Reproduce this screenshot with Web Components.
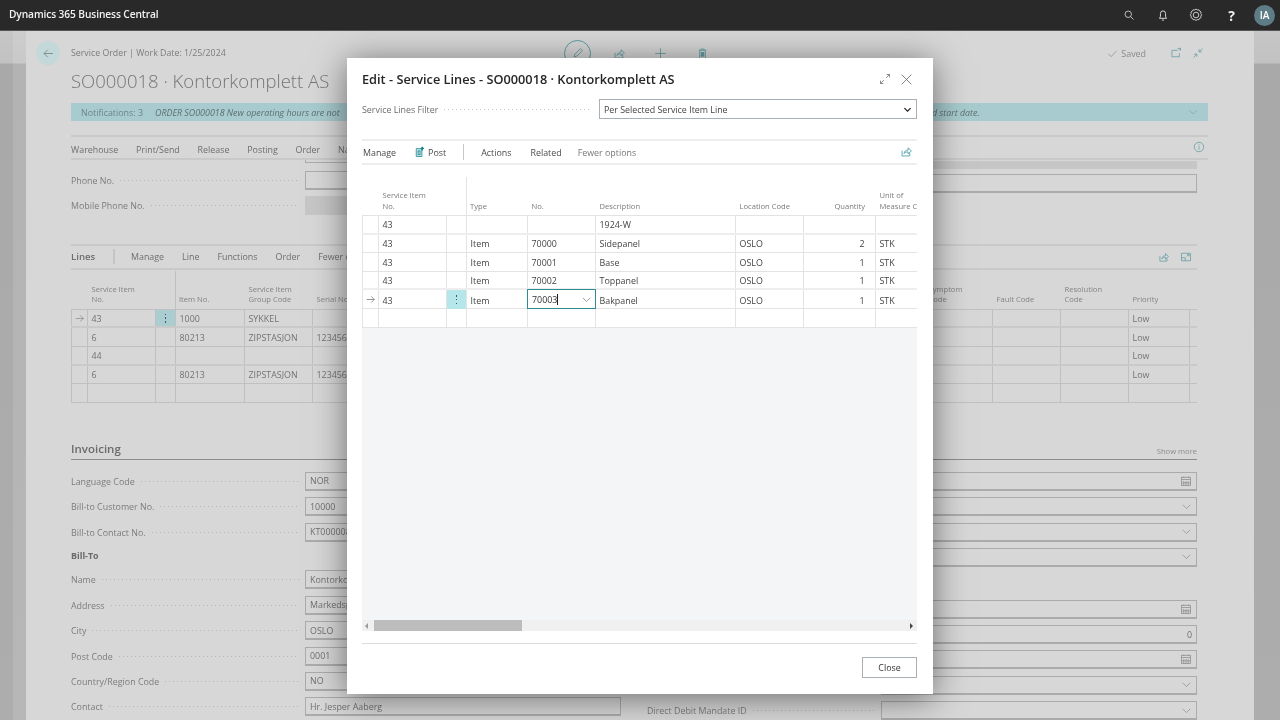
<!DOCTYPE html>
<html lang="en">
<head>
<meta charset="utf-8">
<title>Edit - Service Lines</title>
<style>
  html,body{margin:0;padding:0;height:720px;overflow:hidden;background:#a9a9a9}
  body{font-family:"Open Sans","Noto Sans",Arial,sans-serif;font-size:8.9px}
</style>
</head>
<body>
<bc-app></bc-app>
<script>
const ICONS = {
  search:'<circle cx="7" cy="7" r="4.3"/><path d="M10.2 10.2 14 14"/>',
  bell:'<path d="M3.900 11.800c.9-1 1.200-1.900 1.200-3.800V6.200a2.900 2.900 0 0 1 5.800 0V8c0 1.900.3 2.800 1.200 3.800Z"/><path d="M6.800 13.800h2.400"/>',
  gear:'<path d="M8 1.200l1.500 1 1.800-.2.800 1.600 1.600.8-.2 1.800 1 1.500-1 1.500.2 1.800-1.600.8-.8 1.600-1.800-.2-1.500 1-1.500-1-1.800.2-.8-1.600-1.600-.8.2-1.800-1-1.500 1-1.500-.2-1.800 1.600-.8.8-1.600 1.800.2Z"/><circle cx="8" cy="8" r="3.200"/>',
  arrow:'<path d="M2.500 8h11M7 3.500 2.500 8 7 12.500"/>',
  arrowr:'<path d="M2.500 8h11M9 3.500 13.500 8 9 12.500"/>',
  pencil:'<path d="M3.500 12.500l1-3.200 6.300-6.300 2.200 2.200-6.300 6.300Z"/>',
  share:'<path d="M2.500 7v6.500h9.500V10"/><path d="M5 10.500c.3-2.800 2.200-4.200 5-4.200V3.500l4 3.800-4 3.700V8.500c-2.200 0-3.800.5-5 2Z"/>',
  plus:'<path d="M8 1.500v13M1.500 8h13"/>',
  trash:'<path d="M3.500 4h9M6 4V2.500h4V4M4.500 4v10h7V4"/><path d="M6.500 6v6M8 6v6M9.500 6v6" stroke-width="1.400"/>',
  check:'<path d="M2 8.500 6 12.500 14 4"/>',
  open:'<path d="M10 4.500H2.500v8.500h10V8.500"/><path d="M10 1.800h4v3"/><path d="M14 1.800l-2.600 2.600"/>',
  collapse:'<path d="M14 2l-4.600 4.600M9.500 3v3.600h3.600M2 14l4.600-4.600M6.500 13V9.400H2.900"/>',
  expand:'<path d="M9.500 6.500 14 2M10.200 2H14v3.800M6.500 9.500 2 14M5.800 14H2v-3.800"/>',
  close:'<path d="M2 2l12 12M14 2 2 14"/>',
  chevron:'<path d="M2.500 5.500 8 11l5.500-5.500"/>',
  info:'<circle cx="8" cy="8" r="6.300"/><path d="M8 7v4.500M8 4.500v1.200"/>',
  calendar:'<rect x="2" y="3" width="12" height="11"/><path d="M2 6h12M5 2v2M11 2v2M5 8v6M8 8v6M11 8v6M2 10.500h12"/>',
  maximize:'<path d="M2 3h12v10H2Z"/><path d="M2 9h5v4M9 7l3-2.500M9.500 4.500H12V7"/>',
  post:'<path d="M3 3.500h7.500V14H3Z" fill="#cfe9ec"/><path d="M5.500 6.500v5M8 6.500v5M5 6.500h3.500M5 11.500h3.500"/><path d="M11 1v5M8.800 3.200h4.400" stroke="#0b7f8a" stroke-width="1.800"/>'
};

class BcIcon extends HTMLElement {
  connectedCallback(){
    const n=this.getAttribute('name'), s=this.getAttribute('size')||16, w=this.getAttribute('weight')||1;
    const r=this.shadowRoot||this.attachShadow({mode:'open'});
    r.innerHTML=`<style>:host{display:inline-flex;flex:none;width:${s}px;height:${s}px;color:inherit}svg{width:100%;height:100%;fill:none;stroke:currentColor;stroke-width:${w}}</style><svg viewBox="0 0 16 16">${ICONS[n]||''}</svg>`;
  }
}
customElements.define('bc-icon',BcIcon);

class BcTopbar extends HTMLElement {
  constructor(){super();this.attachShadow({mode:'open'}).innerHTML=`
  <style>
    :host{display:flex;align-items:center;height:31px;background:#292929;color:#fff;padding:0 5px 0 9px;box-sizing:border-box;border-bottom:1px solid #555;font-family:inherit}
    .brand{font-size:10.2px;font-weight:600;flex:1;color:#f2f2f2;letter-spacing:-.1px;padding-bottom:2px}
    .wrap{display:flex;align-items:center;color:#dcdcdc}
    .q{font:700 14px "Open Sans",sans-serif;color:#eee;width:8px;text-align:center}
    .av{width:21px;height:21px;border-radius:50%;background:#5d7c86;color:#fff;font-size:10px;font-weight:600;display:flex;align-items:center;justify-content:center}
  </style>
  <span class="brand">Dynamics 365 Business Central</span>
  <span class="wrap">
    <bc-icon name="search" size="12" weight="1.100"></bc-icon>
    <bc-icon name="bell" size="14" weight="1.100" style="margin-left:21px"></bc-icon>
    <bc-icon name="gear" size="14" weight="1" style="margin-left:19px"></bc-icon>
    <span class="q" style="margin-left:25px">?</span>
    <span class="av" style="margin-left:18.500px">IA</span>
  </span>`}
}
customElements.define('bc-topbar',BcTopbar);

class BcField extends HTMLElement {
  constructor(){super();this.attachShadow({mode:'open'})}
  connectedCallback(){
    const label=this.getAttribute('label')||'', v=this.getAttribute('value')||'', icon=this.getAttribute('icon'), right=this.hasAttribute('right'), dis=this.hasAttribute('disabled');
    this.shadowRoot.innerHTML=`<style>
      :host{display:grid;grid-template-columns:234px 1fr;align-items:center;height:19px;margin-bottom:6.400px;color:#7c7c7c}
      .l{display:flex;align-items:center;gap:6px;white-space:nowrap;padding-right:6px;overflow:hidden}
      .d{flex:1;height:1px;background:repeating-linear-gradient(90deg,#b4b4b4 0 1px,transparent 1px 4px)}
      .i{height:19px;box-sizing:border-box;border:1px solid #a9abad;border-bottom-width:2px;display:flex;align-items:center;padding:0 4px;justify-content:space-between;color:#707070}
      .i.dis{background:#c6c6c6;border-color:#c6c6c6}
      .v{flex:1;white-space:nowrap;overflow:hidden}
      .v.r{text-align:right}
      bc-icon{color:#8c8c8c}
    </style>
    <span class="l"><span>${label}</span>${label?'<span class="d"></span>':''}</span>
    <span class="i ${dis?'dis':''}"><span class="v ${right?'r':''}">${v}</span>${icon?`<bc-icon name="${icon}" size="${icon=='calendar'?12:11}"></bc-icon>`:''}</span>`;
  }
}
customElements.define('bc-field',BcField);

class BcGrid extends HTMLElement {
  constructor(){super();this.attachShadow({mode:'open'})}
  connectedCallback(){
    const cols=this.getAttribute('cols').trim().split(/\s+/).map(c=>c+'px').join(' ');
    const heads=JSON.parse(this.getAttribute('heads'));
    const rows=JSON.parse(this.getAttribute('rows'));
    const active=+this.getAttribute('active'), sep=+this.getAttribute('sep');
    const focus=this.getAttribute('focus');
    const right=(this.getAttribute('right')||'').split(' ');
    const thick=(this.getAttribute('thick')||'').split(' ');
    const head=heads.map((h,i)=>`<div class="h ${i==sep?'sep':''} ${right.includes(''+i)?'rt':''}">${h}</div>`).join('');
    const body=rows.map((r,ri)=>`<div class="row ${thick.includes(''+ri)?'thick':''}">`+r.map((c,ci)=>{
      let cls='c', inner=c;
      if(right.includes(''+ci)) cls+=' rt';
      if(ri==active&&ci==0) {cls+=' ar';inner='<bc-icon name="arrowr" size="11"></bc-icon>';}
      if(ri==active&&ci==2) {cls+=' keb';inner='<span class="k"><i></i><i></i><i></i></span>';}
      if(focus&&focus==ri+','+ci) {cls+=' foc';inner=`<span>${c}<span class="caret"></span></span><bc-icon name="chevron" size="11"></bc-icon>`;}
      return `<div class="${cls}">${inner}</div>`;
    }).join('')+'</div>').join('');
    this.shadowRoot.innerHTML=`<style>
      :host{display:block;overflow:hidden;--cols:${cols}}
      .hd,.row{display:grid;grid-template-columns:var(--cols);width:max-content}
      .hd{height:38px}
      .h{display:flex;align-items:flex-end;padding:0 3.500px 4px;line-height:10.500px;color:var(--grid-head,#7a7a7a);font-size:7.600px;box-sizing:border-box;overflow:hidden;white-space:pre}
      .h.sep{border-left:1px solid var(--grid-line,#e3e3e3);margin-left:-1px;padding-left:3px}
      .h.rt{justify-content:flex-end;text-align:right;padding-right:11px}
      .body{border-top:1px solid var(--grid-line,#e3e3e3)}
      .row{height:18.600px;box-sizing:border-box;border-bottom:1px solid var(--grid-line,#e3e3e3)}
      .row.thick{border-bottom-width:2px;border-bottom-color:var(--grid-thick,#eee)}
      .c{box-sizing:border-box;border-right:1px solid var(--grid-line,#e3e3e3);padding:1px 3.500px 0;display:flex;align-items:center;white-space:nowrap;color:var(--grid-text,#444);overflow:hidden}
      .c:first-child{border-left:1px solid var(--grid-line,#e3e3e3)}
      .c.rt{justify-content:flex-end;padding-right:10.500px}
      .ar{padding:0;justify-content:center;color:var(--grid-head,#666)}
      .keb{background:var(--grid-keb,#b4e6ea);justify-content:center;padding:0}
      .k{display:flex;flex-direction:column;gap:2.200px}
      .k i{width:1.500px;height:1.500px;background:#3c5c60;display:block}
      .foc{border:1px solid #2f8c93;justify-content:space-between;background:#fff;margin-top:-1px;margin-left:-1px;height:19.600px;width:calc(100% + 1px);color:#333;padding-left:4px}
      .foc bc-icon{color:#777}
      .caret{display:inline-block;width:1px;height:11px;background:#222;vertical-align:-2px}
    </style>
    <div class="hd">${head}</div><div class="body">${body}</div>`;
  }
}
customElements.define('bc-grid',BcGrid);

class BcPage extends HTMLElement {
  constructor(){super();
    const e=(n)=>Array(n).fill('');
    const cols='17 68 20 69 68 68 68 68 68 68 68 68 68 68 68 68 68 61 7';
    const heads=JSON.stringify(['','Service Item\nNo.','','Item No.','Service Item\nGroup Code','Serial No.',...e(8),'Symptom\nCode','Fault Code','Resolution\nCode','Priority','']);
    const mk=(a,b,c,d,f)=>['',a,'',b,c,d,...e(11),f,''];
    const rows=JSON.stringify([mk('43','1000','SYKKEL','','Low'),mk('6','80213','ZIPSTASJON','123456','Low'),mk('44','','','','Low'),mk('6','80213','ZIPSTASJON','123456','Low'),mk('','','','','')]);
    this.attachShadow({mode:'open'}).innerHTML=`
  <style>
    :host{display:block;box-sizing:border-box;width:1228px;height:689px;margin-left:26px;background:#d7d7d7;padding:0 57px 0 45px;overflow:hidden;color:#7c7c7c;--grid-line:#c0c0c0;--grid-thick:#c9c9c9;--grid-text:#737373;--grid-head:#838383;--grid-keb:#a9cdd0}
    .top{display:flex;align-items:center;height:26px;margin:9px -11px 0 0}
    .back{width:24px;height:24px;margin-left:-35px;margin-right:11px;border-radius:50%;background:#c2d8d9;display:flex;align-items:center;justify-content:center;color:#6f8488;flex:none}
    .crumb{flex:0 0 493px;white-space:nowrap;font-size:8.800px}
    .pen{width:25px;height:25px;border:1px solid #5e9ca1;border-radius:50%;display:flex;align-items:center;justify-content:center;color:#5e9ca1;flex:none}
    .tl{color:#5e9ca1;display:flex;flex:none}
    .saved{margin-left:auto;display:flex;align-items:center;gap:3px;color:#8a8a8a}
    .title{font-size:18.500px;font-weight:300;color:#767676;line-height:28px;margin-top:1px;white-space:nowrap}
    .note{height:18px;background:#a7cbce;margin:8px -11px 0 0;display:flex;align-items:center;padding-left:10px;color:#5f6f72;white-space:nowrap}
    .note .n{flex:0 0 74px;color:#6b8588}
    .note .m{font-style:italic;flex:0 0 777px;overflow:hidden}
    .note .e{font-style:italic;flex:1}
    .note bc-icon{color:#7f9a9d;margin-right:10px}
    .acts{height:25px;border-top:2px solid #c9c9c9;border-bottom:2px solid #c9c9c9;margin:14px -11px 0 0;padding-top:3px;display:flex;align-items:center;box-sizing:border-box;white-space:nowrap;color:#6e6e6e}
    .acts span{margin-right:17.800px}
    .acts .i{margin:-4px 3px 0 auto;color:#5e9ca1;display:flex}
    .two{display:grid;grid-template-columns:550px 550px;gap:26px;align-items:start}
    .rem{display:grid;grid-template-columns:234px 1fr;height:11px}
    .rem i{grid-column:2;height:3px;border:1px solid #a9abad;border-top:0;box-sizing:border-box}
    .band{margin:1px 0 0 234px;height:8px;background:#c6c6c6}
    .sp5{height:5px}
    .lines{margin-top:22px}
    .lbar{height:26px;border-top:2px solid #c9c9c9;border-bottom:2px solid #c9c9c9;box-sizing:border-box;display:flex;align-items:center;white-space:nowrap;color:#6e6e6e}
    .lbar b{font-weight:600;color:#6e6e6e;font-size:9.600px;flex:0 0 26px}
    .lbar .s{width:2px;height:15px;background:#c4c4c4;margin:0 16px}
    .lbar span{margin-right:18px}
    .lbar .ic{margin:0 5px 0 auto;color:#5e9ca1;display:flex;gap:10px}
    bc-grid{margin-top:1px}
    .inv{margin-top:34px;height:19px;display:flex;align-items:flex-end;justify-content:space-between;border-bottom:1px solid #8c8c8c;padding-bottom:3px}
    .inv b{font-size:11.500px;font-weight:600;color:#6b6b6b}
    .inv span{color:#8c8c8c;font-size:7.600px}
    .form{margin-top:12px}
    .sub{font-weight:700;height:18px;line-height:16px;color:#6a6a6a;margin-bottom:4.500px}
    .gap{height:26.400px}
  </style>
  <div class="top">
    <span class="back"><bc-icon name="arrow" size="13"></bc-icon></span>
    <span class="crumb">Service Order | Work Date: 1/25/2024</span>
    <span class="pen"><bc-icon name="pencil" size="14"></bc-icon></span>
    <span class="tl" style="margin-left:22px"><bc-icon name="share" size="13"></bc-icon></span>
    <span class="tl" style="margin-left:28px"><bc-icon name="plus" size="13"></bc-icon></span>
    <span class="tl" style="margin-left:29px"><bc-icon name="trash" size="13"></bc-icon></span>
    <span class="saved"><bc-icon name="check" size="11"></bc-icon>Saved</span>
    <span class="tl" style="margin-left:24px"><bc-icon name="open" size="12"></bc-icon></span>
    <span class="tl" style="margin:0 4px 0 10px"><bc-icon name="collapse" size="12"></bc-icon></span>
  </div>
  <div class="title">SO000018 · Kontorkomplett AS</div>
  <div class="note"><span class="n">Notifications: 3</span><span class="m">ORDER SO000018 New operating hours are not</span><span class="e">d start date.</span><bc-icon name="chevron" size="10"></bc-icon></div>
  <div class="acts"><span>Warehouse</span><span>Print/Send</span><span>Release</span><span>Posting</span><span>Order</span><span>Na</span><span class="i"><bc-icon name="info" size="12"></bc-icon></span></div>
  <div class="two">
    <div><div class="rem"><i></i></div><bc-field label="Phone No."></bc-field><bc-field label="Mobile Phone No." disabled></bc-field></div>
    <div><div class="band"></div><div class="sp5"></div><bc-field></bc-field></div>
  </div>
  <div class="lines">
    <div class="lbar"><b>Lines</b><i class="s"></i><span>Manage</span><span>Line</span><span>Functions</span><span>Order</span><span>Fewer o</span><span class="ic"><bc-icon name="share" size="12"></bc-icon><bc-icon name="maximize" size="12"></bc-icon></span></div>
    <bc-grid cols="${cols}" sep="3" active="0" thick="0 2" heads='${heads}' rows='${rows}'></bc-grid>
  </div>
  <div class="inv"><b>Invoicing</b><span>Show more</span></div>
  <div class="two form">
    <div>
      <bc-field label="Language Code" value="NOR"></bc-field>
      <bc-field label="Bill-to Customer No." value="10000"></bc-field>
      <bc-field label="Bill-to Contact No." value="KT000008"></bc-field>
      <div class="sub">Bill-To</div>
      <bc-field label="Name" value="Kontorkomplett AS"></bc-field>
      <bc-field label="Address" value="Markedsplassen 1"></bc-field>
      <bc-field label="City" value="OSLO"></bc-field>
      <bc-field label="Post Code" value="0001"></bc-field>
      <bc-field label="Country/Region Code" value="NO"></bc-field>
      <bc-field label="Contact" value="Hr. Jesper Aaberg"></bc-field>
    </div>
    <div>
      <bc-field icon="calendar"></bc-field>
      <bc-field icon="chevron"></bc-field>
      <bc-field icon="chevron"></bc-field>
      <bc-field icon="chevron"></bc-field>
      <div class="gap"></div>
      <bc-field icon="calendar"></bc-field>
      <bc-field value="0" right></bc-field>
      <bc-field icon="calendar"></bc-field>
      <bc-field icon="chevron"></bc-field>
      <bc-field label="Direct Debit Mandate ID" icon="chevron"></bc-field>
    </div>
  </div>`;
  }
}
customElements.define('bc-page',BcPage);

class BcDialog extends HTMLElement {
  constructor(){super();
    const cols='17 68 20 61 68 140 68 72 60';
    const heads=JSON.stringify(['','Service Item\nNo.','','Type','No.','Description','Location Code','Quantity','Unit of\nMeasure Code']);
    const R=(t,n,d,l,q,u)=>['','43','',t,n,d,l,q,u];
    const rows=JSON.stringify([R('','','1924-W','','',''),R('Item','70000','Sidepanel','OSLO','2','STK'),R('Item','70001','Base','OSLO','1','STK'),R('Item','70002','Toppanel','OSLO','1','STK'),R('Item','70003','Bakpanel','OSLO','1','STK'),['','','','','','','','','']]);
    this.attachShadow({mode:'open'}).innerHTML=`
  <style>
    :host{display:flex;flex-direction:column;box-sizing:border-box;width:586px;height:636px;background:#fff;padding:10px 16px 16px 15px;box-shadow:0 4px 32px rgba(0,0,0,.5);color:#444}
    .t{display:flex;align-items:center;height:22px}
    .t h1{margin:0;flex:1;font-size:12.750px;font-weight:600;color:#262626;white-space:nowrap}
    .t bc-icon{color:#555}
    .f{display:grid;grid-template-columns:237px 1fr;height:20px;margin-top:9px;align-items:center;color:#6c6c6c}
    .lab{display:flex;align-items:center;gap:6px;padding-right:9px;white-space:nowrap}
    .lab i{flex:1;height:1px;background:repeating-linear-gradient(90deg,#c4c4c4 0 1px,transparent 1px 4px)}
    .sel{height:20px;border:1px solid #a9b0b5;box-sizing:border-box;display:flex;align-items:center;justify-content:space-between;padding:0 4px;color:#444}
    .sel bc-icon{color:#222}
    .a{height:26px;margin-top:20px;border-top:2px solid #eee;border-bottom:2px solid #eee;box-sizing:border-box;display:flex;align-items:center;white-space:nowrap;padding-left:1px;color:#4a4a4a}
    .a .po{display:flex;align-items:center;gap:2px;margin-left:18px}
    .a .po bc-icon{color:#0b7f8a}
    .a .s{width:1px;height:16px;background:#c8c8c8;margin:0 17px}
    .a .x{margin-right:19px}
    .a .x.rel{margin-right:16px}
    .a .m{color:#777}
    .a .sh{margin-left:auto;margin-right:4px;margin-bottom:2px;color:#3f9aa1;display:flex}
    bc-grid{margin-top:12px;flex:none}
    .empty{flex:1;background:#f4f5f7}
    .sb{height:11px;background:#f0f0f0;display:flex;align-items:center;position:relative}
    .sb .th{position:absolute;left:12px;width:148px;top:0;bottom:0;background:#bdbdbd}
    .sb .ar{width:0;height:0;border:3px solid transparent}
    .sb .ar.l{border-right-color:#9a9a9a}
    .sb .ar.r{border-left-color:#444;margin-left:auto;margin-right:1px}
    .foot{border-top:1px solid #dcdcdc;margin-top:12px;padding-top:13px;display:flex;justify-content:flex-end}
    button{font:inherit;font-size:8.900px;width:55px;height:21px;background:#fff;border:1px solid #a9b0b5;color:#333;padding:0;box-sizing:border-box}
  </style>
  <div class="t"><h1>Edit - Service Lines - SO000018 · Kontorkomplett AS</h1>
    <bc-icon name="expand" size="12" weight=".9"></bc-icon>
    <bc-icon name="close" size="13" weight=".9" style="margin-left:9px;margin-right:4px"></bc-icon></div>
  <div class="f"><span class="lab">Service Lines Filter<i></i></span>
    <span class="sel">Per Selected Service Item Line<bc-icon name="chevron" size="9" weight="2.200"></bc-icon></span></div>
  <div class="a"><span>Manage</span><span class="po"><bc-icon name="post" size="12"></bc-icon><span>Post</span></span><i class="s"></i><span class="x">Actions</span><span class="x rel">Related</span><span class="m">Fewer options</span><span class="sh"><bc-icon name="share" size="13"></bc-icon></span></div>
  <bc-grid cols="${cols}" sep="3" active="4" focus="4,4" right="7" thick="0 3" heads='${heads}' rows='${rows}'></bc-grid>
  <div class="empty"></div>
  <div class="sb"><span class="ar l"></span><span class="th"></span><span class="ar r"></span></div>
  <div class="foot"><button>Close</button></div>`;
  }
}
customElements.define('bc-dialog',BcDialog);

class BcApp extends HTMLElement {
  constructor(){super();this.attachShadow({mode:'open'}).innerHTML=`
  <style>
    :host{display:block;width:1280px;height:720px;overflow:hidden;font-family:"Open Sans","Noto Sans",Arial,sans-serif;font-size:8.900px}
    .stage{position:relative;height:689px;overflow:hidden;background:
      linear-gradient(90deg,transparent 13px,rgba(255,255,255,.12) 13px,rgba(255,255,255,.12) 26px,transparent 26px),
      linear-gradient(180deg,#c6c6c6 0,#c2c2c2 32px,#a9a9a9 33px,#adadad 100%)}
    bc-dialog{position:absolute;left:347px;top:27px}
    .soft{filter:blur(.35px)}
  </style>
  <bc-topbar class="soft"></bc-topbar>
  <div class="stage soft"><bc-page></bc-page><bc-dialog></bc-dialog></div>`}
}
customElements.define('bc-app',BcApp);
</script>
</body>
</html>
